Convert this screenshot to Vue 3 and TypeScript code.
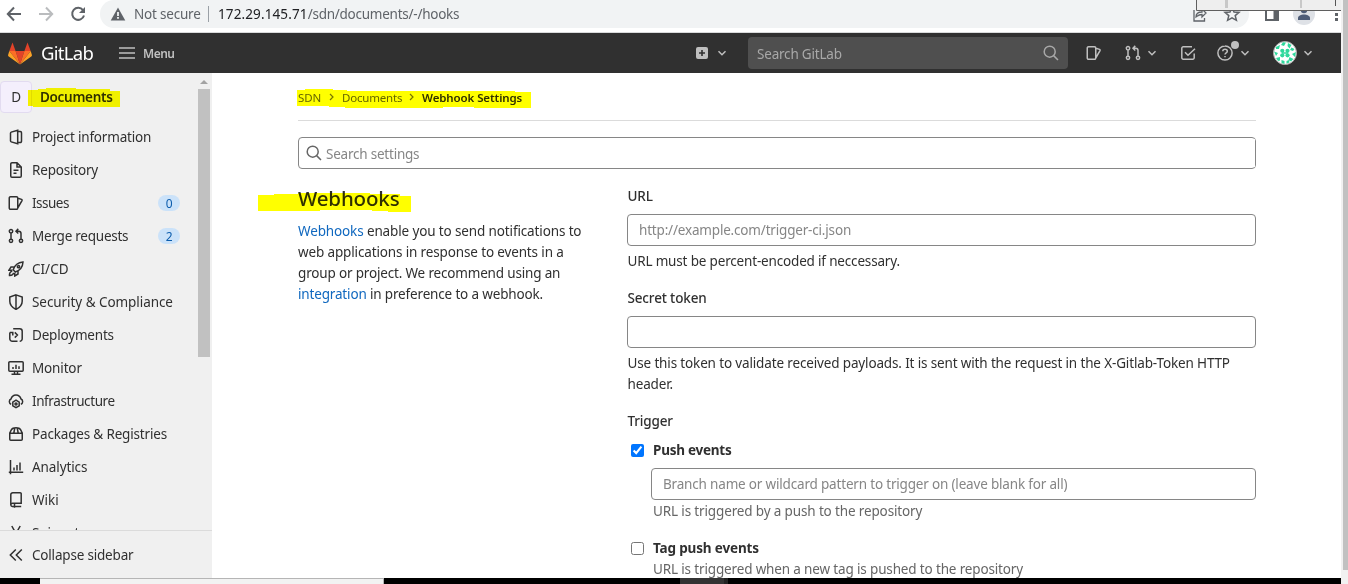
<script setup lang="ts">
import { ref } from 'vue'

interface NavItem {
  label: string
  icon: string
  spacing: string
  badge?: number
}

const navItems: NavItem[] = [
  { label: 'Project information', icon: 'project', spacing: '-0.2px' },
  { label: 'Repository', icon: 'doc', spacing: '-0.19px' },
  { label: 'Issues', icon: 'issues', spacing: '-0.5px', badge: 0 },
  { label: 'Merge requests', icon: 'merge', spacing: '-0.24px', badge: 2 },
  { label: 'CI/CD', icon: 'rocket', spacing: '0' },
  { label: 'Security & Compliance', icon: 'shield', spacing: '-0.06px' },
  { label: 'Deployments', icon: 'deploy', spacing: '-0.19px' },
  { label: 'Monitor', icon: 'monitor', spacing: '-0.15px' },
  { label: 'Infrastructure', icon: 'cloud', spacing: '-0.4px' },
  { label: 'Packages & Registries', icon: 'package', spacing: '-0.17px' },
  { label: 'Analytics', icon: 'chart', spacing: '-0.1px' },
  { label: 'Wiki', icon: 'book', spacing: '0' },
  { label: 'Snippets', icon: 'snippet', spacing: '-0.15px' },
]

const icons: Record<string, string> = {
  project: 'M9.7 1.2v13.6L3.2 12.9a1 1 0 0 1-.7-1V4.1a1 1 0 0 1 .7-1zM9.7 2.5h2.6a1.2 1.2 0 0 1 1.2 1.2v8.6a1.2 1.2 0 0 1-1.2 1.2H9.7',
  doc: 'M9 .75H4A1.25 1.25 0 0 0 2.75 2v12A1.25 1.25 0 0 0 4 15.25h8A1.25 1.25 0 0 0 13.25 14V5zM9 1v4h4M5.5 8.3h5M5.5 11.3h3',
  issues: 'M2.5 1.75h6A1.25 1.25 0 0 1 9.75 3v10a1.25 1.25 0 0 1-1.25 1.25h-6A1.25 1.25 0 0 1 1.25 13V3A1.25 1.25 0 0 1 2.5 1.75zM10 3.2l3.5 1.2a.9.9 0 0 1 .5 1.2L10 12.5',
  merge: 'M3 5v6M3 1.5a1.6 1.6 0 1 1 0 3.4a1.6 1.6 0 1 1 0-3.4M3 11.2a1.6 1.6 0 1 1 0 3.3a1.6 1.6 0 1 1 0-3.3M13 11.2a1.6 1.6 0 1 1 0 3.3a1.6 1.6 0 1 1 0-3.3M13 11V5.5A2.3 2.3 0 0 0 10.7 3.2H8.5M10.3.9L8 3.2l2.3 2.3',
  rocket: 'M5.2 8.7C6.7 4.1 9.5 1.5 15 1c-.3 5.6-3.1 8.5-7.7 10zM5.8 6H3L.9 9.2l3.3.1M10 10.2V13l-3.2 2-.1-3.2M4.3 10.3c-2 0-3 2.1-2.8 4.1 2 0 3.9-.7 4-2.7M10.5 4.6a1.1 1.1 0 1 1 0 2.2a1.1 1.1 0 1 1 0-2.2',
  shield: 'M8 .9L14.2 3v4.2c0 3.8-2.2 6.2-6.2 8.2-4-2-6.2-4.4-6.2-8.2V3zM8 1v14',
  deploy: 'M5.2 1.75h6.5a2.5 2.5 0 0 1 2.5 2.5v7.5a2.5 2.5 0 0 1-2.5 2.5M9.5 14.25H4.3a2.5 2.5 0 0 1-2.5-2.5V5.5M1.8 5.5h3v3M6.8 5.4L9.4 8l-2.6 2.6',
  monitor: 'M1.8 1.75h12.4a1 1 0 0 1 1 1v7.5a1 1 0 0 1-1 1H1.8a1 1 0 0 1-1-1v-7.5a1 1 0 0 1 1-1zM3.5 14.3h9M6.5 11.3v3M9.5 11.3v3M5 7v2M8 4.7V9M11 6.2V9',
  cloud: 'M3.2 11.2A2.8 2.8 0 0 1 3 6C3.7 3.5 5.6 1.9 8 1.9s4.3 1.6 5 4.1a2.8 2.8 0 0 1-.2 5.2M8 7.2l3.2 1.9v3.7L8 14.7l-3.2-1.9V9.1zM8 10a1 1 0 1 1 0 2a1 1 0 1 1 0-2',
  package: 'M1.75 7.2h12.5v6a1 1 0 0 1-1 1H2.75a1 1 0 0 1-1-1zM1.75 7l1.7-3.3C4.2 2.3 5.7 1.7 8 1.7s3.8.6 4.55 2L14.25 7M6.8 2L5.8 7M9.2 2l1 5',
  chart: 'M2.5 1v14.2M.8 13.2h14.4M6 8.5v3M9 6v5.5M12 3.5v8',
  book: 'M13.2 11.2H4.5a1.9 1.9 0 0 0-1.7 1.8V2.7A1.9 1.9 0 0 1 4.7.8h7.5a1 1 0 0 1 1 1zM2.8 13a1.6 1.6 0 0 0 1.7 1.4h8.7M6.5 12v3.8',
  snippet: 'M3.8 1l5 9M12.2 1l-5 9M4.3 10a2 2 0 1 1 0 4a2 2 0 1 1 0-4M11.7 10a2 2 0 1 1 0 4a2 2 0 1 1 0-4',
  search: 'M6.7 1.2a5.5 5.5 0 1 1 0 11a5.5 5.5 0 1 1 0-11M10.6 10.6l4.4 4.4',
  todo: 'M14.2 8.5v4.3a1.4 1.4 0 0 1-1.4 1.4H3.2a1.4 1.4 0 0 1-1.4-1.4V3.2a1.4 1.4 0 0 1 1.4-1.4H12M5 7.2l3 3L15 3.7',
  help: 'M8 .9a7.1 7.1 0 1 1 0 14.2a7.1 7.1 0 1 1 0-14.2M5.8 6.3C5.8 5 6.8 4.2 8 4.2s2.3.8 2.3 2c0 1.6-2.3 1.7-2.3 3.4M8 11v1.3',
  chevron: 'M4.5 6.3L8 9.7l3.5-3.4',
  collapse: 'M7.8 2.5L2.3 8l5.5 5.5M13.8 2.5L8.3 8l5.5 5.5',
}

const pushEvents = ref(true)
const tagPushEvents = ref(false)
</script>

<template>
  <div class="window">
    <div class="content">
      <div class="browser-bar">
        <svg class="nav-glyphs" width="96" height="28" viewBox="0 0 96 28" fill="none" stroke-width="2">
          <path d="M21 14H8.5M14 7.5L7.8 14l6.2 6.5" stroke="#5f6368" />
          <path d="M39 14h12.5M46 7.5L52.2 14 46 20.5" stroke="#babcbe" />
          <path d="M83 10.2A6 6 0 1 0 84 15.5" stroke="#5f6368" />
          <path d="M85 7v6h-6z" fill="#5f6368" />
        </svg>
        <div class="address">
          <svg width="16" height="14" viewBox="0 0 16 14"><path d="M8 .5L15.3 13.5H.7z" fill="#5f6368" /><path d="M7.1 5h1.8v4H7.1zM7.1 10h1.8v1.7H7.1z" fill="#f1f3f4" /></svg>
          <span class="not-secure">Not secure</span>
          <span class="divider"></span>
          <span class="url"><span class="host">172.29.145.71</span>/sdn/documents/-/hooks</span>
        </div>
        <svg class="browser-tools" width="151" height="32" viewBox="0 0 151 32" fill="none">
          <path d="M4 10v11h10.5v-3M6 17c0-3 2-5 6-5V9l4 4-4 4v-2.5c-3 0-4 1-6 2.5z" stroke="#5f6368" stroke-width="1.3" />
          <path d="M42 7l2 5 5 .4-3.8 3.2 1.2 4.7-4.4-2.5-4.4 2.5 1.2-4.7L35 12.4l5-.4z" stroke="#5f6368" stroke-width="1.5" />
          <path d="M75 8h14v13H75zM77 8v11h6.5V8z" fill="#5f6368" fill-rule="evenodd" />
          <circle cx="114" cy="14" r="11" fill="#dee1e6" />
          <circle cx="114" cy="10" r="3.2" fill="#4d5c77" /><path d="M108 20v-2c0-2 3-3.5 6-3.5s6 1.5 6 3.5v2z" fill="#4d5c77" />
          <path d="M145 13h3v3h-3zM145 18h3v3h-3z" fill="#5f6368" />
          <path d="M6.5 -1h150v11.5H6.5z" fill="#eee" stroke="#5f5f5f" />
          <path d="M35 0h3v8h-3zM110 0h2v8h-2z" fill="#c8c8c8" /><path d="M145.5 0v6" stroke="#555" />
        </svg>
      </div>

      <header class="topbar">
        <svg class="tanuki" width="24" height="23" viewBox="0 0 24 23">
          <path d="M12 22.5L7.6 9h8.8z" fill="#e24329" /><path d="M12 22.5L7.6 9H1.3zM12 22.5L16.4 9h6.3z" fill="#fc6d26" />
          <path d="M1.3 9L0 13.2l.4 1L12 22.5zM22.7 9l1.3 4.2-.4 1L12 22.5z" fill="#fca326" />
          <path d="M1.3 9L4.5.5 7.6 9zM22.7 9L19.5.5 16.4 9z" fill="#e24329" />
        </svg>
        <span class="wordmark">GitLab</span>
        <svg class="burger" width="16" height="12" viewBox="0 0 16 12"><path d="M0 1h16M0 6h16M0 11h16" stroke="#bfbfbf" stroke-width="1.5" /></svg>
        <span class="menu">Menu</span>
        <svg class="plus" width="12" height="12" viewBox="0 0 12 12"><rect width="12" height="12" rx="2" fill="#bfbfbf" /><path d="M6 3v6M3 6h6" stroke="#303030" stroke-width="1.6" /></svg>
        <svg class="icon plus-chevron" viewBox="0 0 16 16"><path :d="icons.chevron" /></svg>
        <div class="top-search"><span>Search GitLab</span><svg class="icon" viewBox="0 0 16 16"><path :d="icons.search" /></svg></div>
        <svg class="icon top-issues" viewBox="0 0 16 16"><path :d="icons.issues" /></svg>
        <svg class="icon top-merge" viewBox="0 0 16 16"><path :d="icons.merge" /></svg>
        <svg class="icon merge-chevron" viewBox="0 0 16 16"><path :d="icons.chevron" /></svg>
        <svg class="icon top-todo" viewBox="0 0 16 16"><path :d="icons.todo" /></svg>
        <span class="help"><svg class="icon" viewBox="0 0 16 16"><path :d="icons.help" /></svg><i class="dot"></i></span>
        <svg class="icon help-chevron" viewBox="0 0 16 16"><path :d="icons.chevron" /></svg>
        <svg class="avatar" width="24" height="24" viewBox="0 0 24 24">
          <circle cx="12" cy="12" r="11.5" fill="#fff" stroke="#aaa" />
          <g fill="#2fd89c">
            <circle cx="9.3" cy="9.8" r="2.1" /><circle cx="14.5" cy="9.8" r="2.1" /><circle cx="9.3" cy="14.3" r="2.1" /><circle cx="14.5" cy="14.3" r="2.1" />
            <path d="M9 11.2h6v1.6H9zM10 1.2l3 .2-2 3.600-3-1zM15 2l3.500 2-2 3.500-2-2.500zM3 6l4-2-1 4H3zM18.500 6.500l3 1.500-1.500 2-3-1zM1 10.500l4 1.500-2 3zM23 11l-4 2 3 3zM3 17l4-1v3.500l-2 .5zM20.500 18l-4-2-1 3 2.500 1.500zM8.500 19l3 1v3l-3-1zM13.500 20l2.500-1 .5 2.500-3 1z" />
          </g>
        </svg>
        <svg class="icon avatar-chevron" viewBox="0 0 16 16"><path :d="icons.chevron" /></svg>
      </header>

      <div class="body">
        <aside class="sidebar">
          <div class="side-scroll">
            <div class="side-main">
              <div class="project"><span class="letter">D</span><span class="project-name">Documents</span></div>
              <nav>
                <a v-for="item in navItems" :key="item.label" class="nav-item">
                  <svg class="icon" viewBox="0 0 16 16"><path :d="icons[item.icon]" /></svg>
                  <span class="nav-label" :style="{ letterSpacing: item.spacing }">{{ item.label }}</span>
                  <span v-if="item.badge !== undefined" class="badge">{{ item.badge }}</span>
                </a>
              </nav>
            </div>
            <div class="side-track"><i class="arrow"></i><i class="thumb"></i></div>
          </div>
          <div class="collapse"><svg class="icon" viewBox="0 0 16 16"><path :d="icons.collapse" /></svg><span>Collapse sidebar</span></div>
        </aside>

        <main class="page">
          <div class="crumbs">
            <span class="c1">SDN</span><svg class="sep" viewBox="0 0 6 8"><path d="M1 1l3 3-3 3" /></svg>
            <span class="c2">Documents</span><svg class="sep" viewBox="0 0 6 8"><path d="M1 1l3 3-3 3" /></svg>
            <b class="c3">Webhook Settings</b>
          </div>
          <label class="settings-search"><svg class="icon" viewBox="0 0 16 16"><path :d="icons.search" /></svg><input type="text" placeholder="Search settings" /></label>
          <div class="columns">
            <section class="intro">
              <h4>Webhooks</h4>
              <p><span class="p1"><a>Webhooks</a> enable you to send notifications to</span><br /><span class="p2">web applications in response to events in a</span><br /><span class="p3">group or project. We recommend using an</span><br /><span class="p4"><a>integration</a> in preference to a webhook.</span></p>
            </section>
            <form class="form">
              <div class="label l-url">URL</div>
              <input class="field" type="text" placeholder="http://example.com/trigger-ci.json" />
              <div class="hint h1">URL must be percent-encoded if neccessary.</div>
              <div class="label l-secret">Secret token</div>
              <input class="field" type="text" />
              <div class="hint h2">Use this token to validate received payloads. It is sent with the request in the X-Gitlab-Token HTTP<br />header.</div>
              <div class="label l-trigger">Trigger</div>
              <div class="check"><input v-model="pushEvents" type="checkbox" /><b class="k1">Push events</b></div>
              <div class="nested">
                <input class="field branch" type="text" placeholder="Branch name or wildcard pattern to trigger on (leave blank for all)" />
                <div class="muted m1">URL is triggered by a push to the repository</div>
              </div>
              <div class="check second"><input v-model="tagPushEvents" type="checkbox" /><b class="k2">Tag push events</b></div>
              <div class="nested"><div class="muted m2">URL is triggered when a new tag is pushed to the repository</div></div>
            </form>
          </div>
        </main>
      </div>
      <div class="taskbar"><i class="task-search"></i><i class="task-active"></i><i class="task-edge"></i></div>
    </div>
    <div class="page-track"><i></i></div>
    <svg class="marker" width="560" height="220" viewBox="0 0 560 220" fill="#ff0">
      <path d="M28 90h10v-1h8v-1h30v1h34v2h10v16H33v-1h-5z" />
      <path d="M297 90h8v-1h28v1h14v1h168v1h16v16h-57v-1h-31v1h-98v-1h-16v-1h-32z" />
      <path d="M258 195h16v-1h24v-1h72v1h30v2h11v16h-23v-1h-16v-1h-52v1h-62z" />
    </svg>
  </div>
</template>

<style scoped>
.window { position: relative; display: flex; width: 1348px; height: 584px; overflow: hidden; background: #fff; font-family: "Noto Sans", "Open Sans", sans-serif; font-size: 13.5px; line-height: 21px; letter-spacing: -0.15px; color: #303030; white-space: nowrap; }
.window * { box-sizing: border-box; }
svg { display: block; flex: none; }
a { color: #1068bf; }
.content { width: 1341px; display: flex; flex-direction: column; }
.icon { width: 16px; height: 16px; fill: none; stroke: currentColor; stroke-width: 1.5; }

.browser-bar { height: 33px; display: flex; border-bottom: 1px solid #d9dadb; background: #fff; position: relative; flex: none; }
.nav-glyphs { width: 96px; }
.address { width: 1149px; height: 28px; margin-left: 4px; background: #f1f3f4; border-radius: 14px; display: flex; align-items: center; padding-left: 10px; color: #5f6368; letter-spacing: -0.25px; }
.not-secure { margin-left: 8px; width: 66px; letter-spacing: -0.2px; }
.divider { width: 1px; height: 16px; background: #9aa0a6; margin: 0 9px 0 8px; }
.host { color: #202124; letter-spacing: 0.12px; }
.browser-tools { position: absolute; right: 0; top: 0; }

.topbar { height: 40px; flex: none; background: #303030; display: flex; align-items: center; padding-left: 8px; color: #bfbfbf; }
.wordmark { color: #fff; font-size: 18.5px; margin-left: 9px; margin-bottom: 2px; width: 54px; letter-spacing: -0.7px; }
.burger { margin-left: 24px; }
.menu { margin-left: 8px; width: 34px; font-size: 12px; font-weight: 600; letter-spacing: -0.5px; }
.plus { margin-left: 519px; }
.plus-chevron { margin-left: 6px; }
.top-search { width: 320px; height: 32px; margin-left: 18px; border-radius: 4px; background: #4f4f4f; display: flex; align-items: center; justify-content: space-between; padding: 0 9px; color: #a8a8a8; letter-spacing: -0.2px; }
.top-search span { padding-top: 2px; }
.top-issues { margin-left: 18px; }
.top-merge { margin-left: 23px; }
.merge-chevron { margin-left: 3px; }
.top-todo { margin-left: 20px; }
.help { position: relative; margin-left: 21px; }
.dot { position: absolute; width: 8px; height: 8px; border-radius: 50%; background: #bfbfbf; left: 14px; top: -4px; }
.help-chevron { margin-left: 4px; }
.avatar { margin-left: 20px; }
.avatar-chevron { margin-left: 3px; }

.body { flex: 1; min-height: 0; display: flex; }
.sidebar { width: 212px; flex: none; background: #f0f0f0; display: flex; flex-direction: column; }
.side-scroll { height: 457px; display: flex; overflow: hidden; }
.side-main { width: 198px; }
.project { height: 48px; display: flex; align-items: center; }
.letter { width: 32px; height: 32px; border: 1px solid #e2dbf0; border-radius: 4px; background: #f4effc; text-align: center; line-height: 31px; }
.project-name { margin-left: 8px; font-weight: 600; letter-spacing: -0.3px; }
.nav-item { display: flex; align-items: center; height: 33px; padding: 0 18px 1px 8px; color: #303030; }
.nav-label { margin-left: 8px; flex: 1; }
.badge { width: 22px; height: 16px; border-radius: 8px; background: #cbe2f9; color: #0b5cad; font-size: 12px; line-height: 17px; text-align: center; }
.side-track { width: 12px; display: flex; flex-direction: column; align-items: center; }
.arrow { width: 0; height: 0; border: 4px solid transparent; border-top: 0; border-bottom: 4px solid #a3a3a3; margin-top: 7px; }
.thumb { width: 12px; height: 268px; margin-top: 5px; background: #c1c1c1; }
.collapse { flex: 1; border-top: 1px solid #dbdbdb; display: flex; align-items: center; gap: 8px; padding: 1px 0 0 8px; letter-spacing: -0.19px; }

.page { padding: 14px 85px 0 86px; flex: 1; min-width: 0; overflow: hidden; }
.crumbs { height: 34px; border-bottom: 1px solid #dbdbdb; display: flex; align-items: flex-start; font-size: 11.5px; color: #666; }
.sep { width: 6px; height: 8px; margin: 6px 7px 0; fill: none; stroke: #777; stroke-width: 1.2; }
.c1 { width: 24px; }
.c2 { width: 60px; letter-spacing: -0.2px; }
.c3 { font-weight: 600; color: #303030; letter-spacing: -0.1px; }
.settings-search { display: flex; align-items: center; height: 32px; margin-top: 16px; border: 1px solid #868686; border-radius: 4px; padding-left: 7px; color: #666; }
input[type='text'] { font: inherit; color: #303030; background: #fff; outline: 0; letter-spacing: -0.18px; }
.settings-search input { border: 0; padding: 2px 0 0; margin-left: 4px; flex: 1; height: 28px; letter-spacing: -0.22px; }
input::placeholder { color: #868686; opacity: 1; }
.columns { display: flex; }
.intro { width: 329px; flex: none; padding-top: 17px; }
h4 { margin: 0; font-size: 20.5px; line-height: 24px; font-weight: 500; letter-spacing: -0.15px; }
p { margin: 11px 0 0; }
.p1 { letter-spacing: -0.13px; }
.p2 { letter-spacing: -0.14px; }
.p3 { letter-spacing: -0.17px; }
.p4 { letter-spacing: -0.16px; }
.form { flex: 1; min-width: 0; padding-top: 17px; }
.label { font-weight: 500; padding-left: 0.5px; }
.field { display: block; width: 100%; height: 32px; border: 1px solid #868686; border-radius: 4px; padding: 0 11px; margin: 7px 0 0; }
.hint { margin-top: 5px; padding-left: 0.5px; }
.h1 { letter-spacing: -0.17px; }
.h2 { letter-spacing: -0.145px; }
.l-secret { margin-top: 16px; }
.l-trigger { margin-top: 16px; }
.check { display: flex; align-items: center; height: 21px; margin-top: 8px; }
.check input { width: 13px; height: 13px; margin: 0 9px 0 4px; }
.check b { font-weight: 700; }
.k1 { letter-spacing: -0.25px; }
.k2 { letter-spacing: -0.15px; }
.nested { margin-left: 24px; }
.muted { padding-left: 2px; color: #666; }
.m1 { letter-spacing: -0.14px; margin-top: 1px; }
.check.second { margin-top: 16px; }

.taskbar { height: 6px; flex: none; background: #000; display: flex; padding-left: 40px; }
.task-search { width: 344px; background: #f2f2f2; border-top: 1px solid #b5b5b5; border-right: 1px solid #b5b5b5; }
.task-active { width: 44px; margin-left: 296px; background: #333; }
.task-edge { width: 4px; background: #222; }
.page-track { width: 7px; background: #f1f1f1; padding-left: 2px; }
.page-track i { display: block; height: 570px; background: #c1c1c1; }
.marker { position: absolute; left: 0; top: 0; mix-blend-mode: multiply; pointer-events: none; }
</style>

<style>
body { margin: 0; overflow: hidden; }
</style>
